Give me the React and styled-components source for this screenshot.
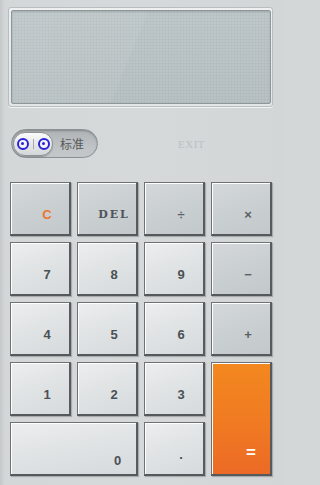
import styled, { createGlobalStyle } from "styled-components";

const GlobalStyle = createGlobalStyle`
  html, body {
    margin: 0;
    padding: 0;
    background: #d3d7d8;
  }
`;

const keys = [
  { label: "C", kind: "op", tone: "accent" },
  { label: "DEL", kind: "op", tone: "del" },
  { label: "÷", kind: "op", tone: "sym" },
  { label: "×", kind: "op", tone: "sym" },
  { label: "7" },
  { label: "8" },
  { label: "9" },
  { label: "−", kind: "op", tone: "sym" },
  { label: "4" },
  { label: "5" },
  { label: "6" },
  { label: "+", kind: "op", tone: "sym" },
  { label: "1" },
  { label: "2" },
  { label: "3" },
  { label: "=", kind: "equals" },
  { label: "0", kind: "zero" },
  { label: "." },
];

const App = () => {
  return (
    <Page>
      <GlobalStyle />
      <DisplayFrame>
        <Screen />
      </DisplayFrame>

      <ToolRow>
        <Toggle>
          <Knob>
            <Ring />
            <Divider />
            <Ring />
          </Knob>
          <ToggleLabel>标准</ToggleLabel>
        </Toggle>
        <ExitText>EXIT</ExitText>
      </ToolRow>

      <KeyGrid>
        {keys.map((k) => (
          <Key key={k.label} $kind={k.kind || "digit"} $tone={k.tone}>
            <span>{k.label}</span>
          </Key>
        ))}
      </KeyGrid>
    </Page>
  );
};

export default App;

const Page = styled.div`
  width: 283px;
  height: 485px;
  overflow: hidden;
  box-sizing: border-box;
  padding-top: 7px;
  background: linear-gradient(90deg, #c4c8c9 0px, #d3d7d8 5px, #d5d9da 50%, #d2d6d7 100%);
  font-family: "Liberation Sans", Arial, sans-serif;
`;

const DisplayFrame = styled.div`
  margin-left: 8px;
  width: 265px;
  height: 100px;
  box-sizing: border-box;
  padding: 2px 1px 2px 2px;
  border: 1px solid #b9bdbf;
  border-radius: 3px;
  background: linear-gradient(180deg, #eef0f0, #e3e6e7);
  box-shadow: 0 1px 0 #f2f3f3;
`;

const Screen = styled.div`
  width: 100%;
  height: 100%;
  box-sizing: border-box;
  border: 1px solid #8e989a;
  border-radius: 2px;
  background:
    linear-gradient(112deg, rgba(255, 255, 255, 0.07) 0%, rgba(255, 255, 255, 0.05) 46%, rgba(255, 255, 255, 0) 46.2%),
    repeating-linear-gradient(0deg, rgba(120, 135, 138, 0.07) 0 1px, transparent 1px 3px),
    repeating-linear-gradient(90deg, rgba(120, 135, 138, 0.07) 0 1px, transparent 1px 3px),
    linear-gradient(180deg, #bec7c9, #b8c1c3);
  box-shadow: inset 0 1px 2px rgba(0, 0, 0, 0.15);
`;

const ToolRow = styled.div`
  display: flex;
  align-items: center;
  margin: 22px 0 0 11px;
  height: 29px;
`;

const Toggle = styled.div`
  display: flex;
  align-items: center;
  width: 87px;
  height: 29px;
  box-sizing: border-box;
  padding: 1px;
  border: 1px solid #8d9193;
  border-radius: 15px;
  background: linear-gradient(180deg, #aeb2b4, #bfc3c5 60%, #c4c8ca);
  box-shadow: inset 0 1px 2px rgba(0, 0, 0, 0.25);
`;

const Knob = styled.div`
  display: flex;
  align-items: center;
  justify-content: center;
  gap: 3px;
  width: 40px;
  height: 24px;
  box-sizing: border-box;
  border: 1px solid #8f9395;
  border-radius: 12px;
  background: linear-gradient(180deg, #fbfbfb, #e2e4e5 60%, #d4d7d8);
  box-shadow: 0 1px 1px rgba(0, 0, 0, 0.25);
`;

const Ring = styled.span`
  position: relative;
  width: 12px;
  height: 12px;
  box-sizing: border-box;
  border: 2px solid #2a22d6;
  border-radius: 50%;
  background: #f4f4f8;

  &::after {
    content: "";
    position: absolute;
    left: 2.5px;
    top: 2.5px;
    width: 3px;
    height: 3px;
    border-radius: 50%;
    background: #2a22d6;
  }
`;

const Divider = styled.span`
  width: 1px;
  height: 10px;
  margin: 0 1px;
  background: #a4a8aa;
`;

const ToggleLabel = styled.span`
  margin-left: 7px;
  font-family: "Noto Sans CJK SC", "Noto Sans", sans-serif;
  font-size: 12px;
  color: #55595b;
`;

const ExitText = styled.span`
  margin-left: 80px;
  font-family: "Liberation Serif", "Times New Roman", serif;
  font-size: 11px;
  letter-spacing: 0.5px;
  color: #bcc0c2;
`;

const KeyGrid = styled.div`
  display: grid;
  grid-template-columns: repeat(4, 61px);
  grid-auto-rows: 54px;
  column-gap: 6px;
  row-gap: 6px;
  margin: 24px 0 0 10px;
`;

const keyBackgrounds = {
  digit: "linear-gradient(160deg, #eceeef 0%, #e1e4e5 45%, #d6dadc 100%)",
  zero: "linear-gradient(170deg, #eceeef 0%, #e1e4e5 45%, #d6dadc 100%)",
  op: "linear-gradient(160deg, #d4d8da 0%, #cacfd1 50%, #c3c8cb 100%)",
  equals: "linear-gradient(180deg, #f3881f 0%, #f07a22 55%, #ec6a26 100%)",
};

const keyPadding = {
  digit: "12px 0 0 14px",
  op: "12px 0 0 14px",
  zero: "24px 0 0 88px",
  equals: "68px 0 0 20px",
};

const toneColor = {
  accent: "#f0742c",
  del: "#4f555b",
  sym: "#5b6066",
};

const Key = styled.div`
  grid-column: ${(p) => (p.$kind === "zero" ? "span 2" : "auto")};
  grid-row: ${(p) => (p.$kind === "equals" ? "span 2" : "auto")};
  display: flex;
  align-items: center;
  justify-content: center;
  box-sizing: border-box;
  padding: ${(p) => keyPadding[p.$kind]};
  border: 1px solid #6e7275;
  border-right: 2px solid #575b5e;
  border-bottom: 2px solid #55595c;
  background: ${(p) => keyBackgrounds[p.$kind]};
  box-shadow: inset 1px 1px 0 #ffffff, 1px 1px 1px rgba(0, 0, 0, 0.2);
  color: ${(p) => (p.$kind === "equals" ? "#ffffff" : toneColor[p.$tone] || "#4a5056")};
  font-family: ${(p) =>
    p.$tone === "del" ? '"DejaVu Serif", "Liberation Serif", serif' : '"Liberation Sans", Arial, sans-serif'};
  font-weight: 700;
  font-size: ${(p) =>
    p.$kind === "equals" ? "17px" : p.$tone === "del" ? "11px" : p.$tone === "sym" ? "13px" : "13px"};
  letter-spacing: ${(p) => (p.$tone === "del" ? "2px" : "0")};
  user-select: none;
`;
